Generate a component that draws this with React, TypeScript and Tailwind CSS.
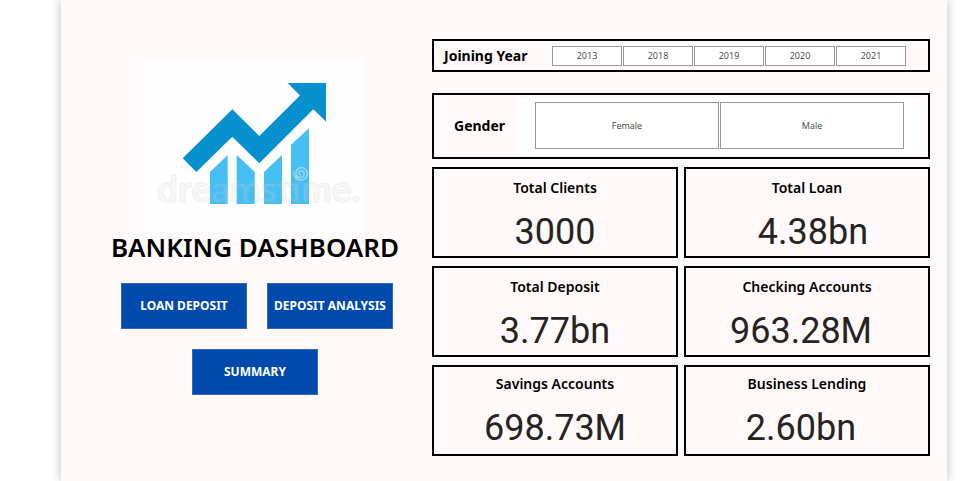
import React from "react";

const years = ["2013", "2018", "2019", "2020", "2021"];
const genders = ["Female", "Male"];

type Metric = { label: string; value: string; card: string; shift: string };

const metrics: Metric[] = [
  { label: "Total Clients", value: "3000", card: "pt-[9px]", shift: "" },
  { label: "Total Loan", value: "4.38bn", card: "pt-[9px]", shift: "pl-3" },
  { label: "Total Deposit", value: "3.77bn", card: "pt-[9px]", shift: "" },
  { label: "Checking Accounts", value: "963.28M", card: "pt-[9px]", shift: "pr-3" },
  { label: "Savings Accounts", value: "698.73M", card: "pt-[7px]", shift: "" },
  { label: "Business Lending", value: "2.60bn", card: "pt-[7px]", shift: "pr-3" },
];

function Logo() {
  return (
    <svg
      viewBox="143 60 221 172"
      className="h-[172px] w-[221px] bg-[#fefefe]"
      role="img"
      aria-label="Rising bar chart with arrow"
    >
      <g fill="#45bff4">
        <path d="M210 204V172L227.7 155V204Z" />
        <path d="M236.7 204V155L254.7 172V204Z" />
        <path d="M264 204V172L282 155V204Z" />
        <path d="M291 204V144.7L309 128.3V204Z" />
      </g>
      <path
        fill="#0690cd"
        d="M182.7 158.3L232.3 109.3L259.3 136L300 95.5L287.7 83H326V121.5L313.3 109.3L259.3 163.3L232.3 136.7L196.3 172Z"
      />
      <g opacity="0.2">
        <text
          x="157"
          y="202"
          fontSize="37"
          fontWeight="700"
          fontFamily="Lato, sans-serif"
          fill="#dcdcdc"
          stroke="#b4b4b4"
          strokeWidth="1"
        >
          dreamstime.
        </text>
      </g>
      <path
        d="M301 175c-2 0-3-3-1-4c3-1 5 2 4 4c-2 4-8 3-8-2c0-5 6-7 9-4c4 4 2 10-3 11c-6 0-9-5-8-9"
        fill="none"
        stroke="#d5e2e8"
        strokeWidth="1.5"
        opacity="0.6"
      />
    </svg>
  );
}

function NavButton({ children }: { children: React.ReactNode }) {
  return (
    <button
      type="button"
      className="h-[46px] w-[126px] whitespace-nowrap border border-[#2f6cbb] bg-[#004aad] text-xs font-bold text-white"
    >
      {children}
    </button>
  );
}

function Slicer({ name, items }: { name: string; items: string[] }) {
  return (
    <div role="group" aria-label={name} className="flex h-full flex-1 gap-px">
      {items.map((item) => (
        <button
          key={item}
          type="button"
          className="flex-1 border border-[#999] bg-white font-['Open_Sans',sans-serif] text-[9px] leading-3 text-[#444]"
        >
          {item}
        </button>
      ))}
    </div>
  );
}

export default function App() {
  return (
    <div className="overflow-hidden bg-white font-['Noto_Sans',sans-serif] text-black">
      <main className="mr-7 ml-[61px] grid min-h-screen grid-cols-[371fr_498fr] bg-[#fff9f9] pr-[17px] shadow-[0_0_10px_rgba(0,0,0,0.25)]">
        <section className="flex flex-col items-center pt-[60px] pl-[17px]">
          <div className="pr-1">
            <Logo />
          </div>
          <h1 className="text-[26px] leading-[30px] font-semibold whitespace-nowrap">
            BANKING DASHBOARD
          </h1>
          <nav className="mt-[21px] flex flex-col items-center gap-5">
            <div className="flex gap-5 pl-1">
              <NavButton>LOAN DEPOSIT</NavButton>
              <NavButton>DEPOSIT ANALYSIS</NavButton>
            </div>
            <NavButton>SUMMARY</NavButton>
          </nav>
        </section>

        <section className="pt-[39px] pb-6">
          <div className="flex h-[33px] items-center border-2 border-black pr-[22px] pl-2.5">
            <h2 className="w-[108px] text-sm font-bold">Joining Year</h2>
            <div className="flex h-5 flex-1">
              <Slicer name="Joining Year" items={years} />
            </div>
          </div>

          <div className="mt-[21px] flex h-[66px] items-center border-2 border-black pr-2 pl-5">
            <h2 className="w-[63px] text-sm font-bold">Gender</h2>
            <div className="flex h-14 flex-1 bg-white pt-1 pr-4 pb-[5px] pl-[18px]">
              <Slicer name="Gender" items={genders} />
            </div>
          </div>

          <dl className="mt-2 grid grid-cols-2 gap-x-1.5 gap-y-2">
            {metrics.map((m) => (
              <div
                key={m.label}
                className={`h-[91px] border-2 border-black text-center ${m.card}`}
              >
                <dt className="text-sm leading-5 font-semibold">{m.label}</dt>
                <dd
                  className={`mt-3.5 font-['Roboto',sans-serif] text-4xl leading-10 font-normal text-[#252423] ${m.shift}`}
                >
                  {m.value}
                </dd>
              </div>
            ))}
          </dl>
        </section>
      </main>
    </div>
  );
}
